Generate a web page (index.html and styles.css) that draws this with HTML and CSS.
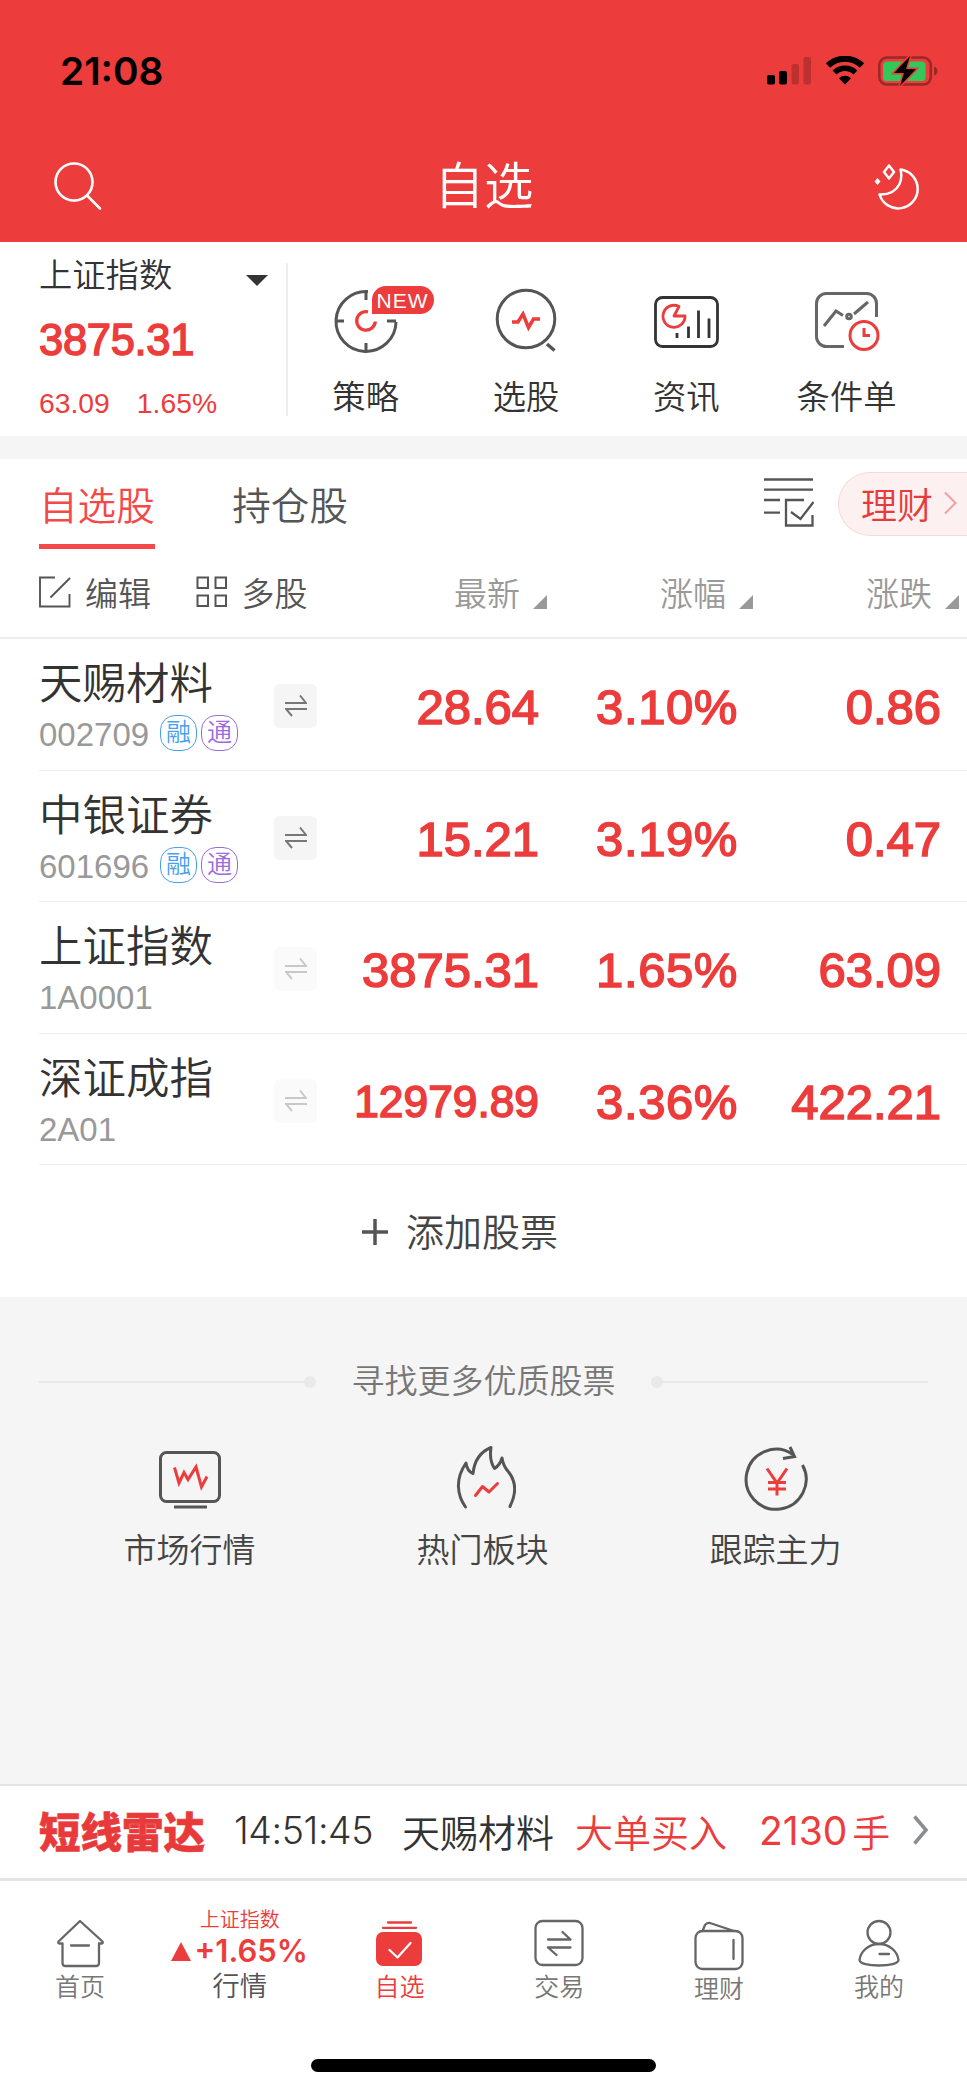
FILE: index.html
```
<!DOCTYPE html>
<html lang="zh-CN">
<head>
  <meta charset="UTF-8">
  <title>自选</title>
  <link rel="stylesheet" href="styles.css">
</head>
<body>
  <header class="header">
    <div class="status-bar">
      <span class="time">21:08</span>
      <div class="status-icons">
        <svg width="44" height="28" viewBox="0 0 44 28">
          <rect x="0" y="18" width="8" height="9.500" rx="2"/>
          <rect x="12" y="14" width="8" height="13.500" rx="2"/>
          <rect x="24.500" y="7" width="7.500" height="20.500" rx="2" opacity=".2"/>
          <rect x="36.500" y="0" width="7.500" height="27.500" rx="2" opacity=".2"/>
        </svg>
        <svg class="wifi" width="40" height="29" viewBox="0 0 40 29">
          <path d="M3 9.500a24.500 24.500 0 0 1 34 0" fill="none" stroke="#000" stroke-width="6"/>
          <path d="M9.500 16.500a15 15 0 0 1 21 0" fill="none" stroke="#000" stroke-width="5.500"/>
          <path d="M20 28.500l-6-6.200a8.500 8.500 0 0 1 12 0z"/>
        </svg>
        <svg width="60" height="30" viewBox="0 0 60 30">
          <rect x="1.300" y="1.600" width="51.500" height="27" rx="7.500" fill="none" stroke="#9b2727" stroke-width="2.500"/>
          <path d="M56 10.500q3.500 1 3.500 4.500t-3.500 4.500z" fill="#9b2727"/>
          <rect x="5" y="5.500" width="42.500" height="19.500" rx="3.500" fill="#34c759"/>
          <path d="M32 0L16 17h10l-4 13 16-17H28z" stroke="#ec3c3c" stroke-width="3"/>
          <path d="M32 0L16 17h10l-4 13 16-17H28z"/>
        </svg>
      </div>
    </div>
    <div class="title-bar">
      <svg width="48" height="50" viewBox="0 0 48 50" fill="none" stroke="#fff" stroke-width="2.600" stroke-linecap="round">
        <circle cx="20" cy="20" r="18.500"/>
        <path d="M33.500 34L46 46.500"/>
      </svg>
      <h1>自选</h1>
      <svg width="46" height="46" viewBox="0 0 46 46" fill="none" stroke="#fff" stroke-width="2.500" stroke-linejoin="round">
        <path d="M26.500 5.500A19.500 19.500 0 1 1 5.500 30.500Q20 31 25.500 20Q28.500 13 26.500 5.500z"/>
        <path d="M15 1.500l5 6.500-5 6.500-5-6.500z"/>
        <path d="M3.500 14l3 3.500-3 3.500-3-3.500z" fill="#fff" stroke="none"/>
      </svg>
    </div>
  </header>

  <section class="overview">
    <div class="index-box">
      <div class="index-name">上证指数 <i class="caret"></i></div>
      <div class="index-value">3875.31</div>
      <div class="index-change"><span>63.09</span><span>1.65%</span></div>
    </div>
    <div class="shortcuts">
      <div class="shortcut">
        <svg width="66" height="66" viewBox="0 0 66 66" fill="none" stroke="#555" stroke-width="3">
          <path d="M35 3.500A30 30 0 1 0 63 34"/>
          <path d="M33 4v8M4 33h7M63 33h-9M33 63v-8"/>
          <path d="M35 23.800A9.300 9.300 0 1 0 42.300 33.500" stroke="#ec3c3c" stroke-width="3.300"/>
        </svg>
        <span>策略</span>
        <b class="badge">NEW</b>
      </div>
      <div class="shortcut">
        <svg width="66" height="66" viewBox="0 0 66 66" fill="none" stroke="#555" stroke-width="3">
          <circle cx="33" cy="31" r="28.800"/>
          <path d="M54 56l7.500 6.500" stroke-width="3.500"/>
          <path d="M19 34h6l5-8 5.500 13.500 5-8.500H47" stroke="#ec3c3c" stroke-width="3.500"/>
        </svg>
        <span>选股</span>
      </div>
      <div class="shortcut">
        <svg width="66" height="66" viewBox="0 0 66 66" fill="none" stroke="#333" stroke-width="2.800">
          <rect x="2.500" y="9.500" width="62" height="49" rx="7"/>
          <path d="M24 45v5M35.500 38.500V50M45.500 22.500V50M56 30.500V50"/>
          <path d="M26 18.500A11 11 0 1 0 32 28H21z" stroke="#ec3c3c" stroke-linejoin="round"/>
        </svg>
        <span>资讯</span>
      </div>
      <div class="shortcut">
        <svg width="66" height="66" viewBox="0 0 66 66" fill="none" stroke="#666" stroke-width="3">
          <path d="M30 58.500H12.500a10 10 0 0 1-10-10V15.500a10 10 0 0 1 10-10h40a10 10 0 0 1 10 10V29"/>
          <path d="M10 38l12-15 7 4.500M40 26L54 14"/>
          <circle cx="35" cy="28.500" r="2.300"/>
          <g stroke="#ec3c3c"><circle cx="50" cy="47.500" r="14"/><path d="M50 40v7.500h6"/></g>
        </svg>
        <span>条件单</span>
      </div>
    </div>
  </section>

  <section class="watchlist">
    <div class="tabs">
      <span class="tab active">自选股</span>
      <span class="tab">持仓股</span>
      <svg class="list-icon" width="50" height="50" viewBox="0 0 50 50" fill="none" stroke="#555" stroke-width="2.300">
        <path d="M0 2.500h49M0 12.700h49M0 23h16M0 35.700h16"/>
        <path d="M40 23H22v25.500h26.500V38"/>
        <path d="M27 35l9.500 7L49.500 25"/>
      </svg>
      <a class="finance">理财
        <svg width="13" height="24" viewBox="0 0 13 24" fill="none" stroke="#f0a0a0" stroke-width="2"><path d="M1 1.500L11.500 12 1 22.500"/></svg>
      </a>
    </div>

    <div class="grid-row toolbar">
      <div class="tools">
        <svg width="32" height="32" viewBox="0 0 32 32" fill="none" stroke="#555" stroke-width="1.900"><path d="M16 1.500H1v29h29.500V18M11.500 21.500L31 2"/></svg>
        <span>编辑</span>
        <svg class="grid-icon" width="32" height="32" viewBox="0 0 32 32" fill="none" stroke="#555" stroke-width="2"><path d="M1.500 1.500h10.500v10.500H1.500zM19.500 1.500H30v10.500H19.500zM1.500 19.500h10.500V30H1.500zM19.500 19.500H30V30H19.500z"/></svg>
        <span>多股</span>
      </div>
      <div class="col">最新<i class="sort"></i></div>
      <div class="col">涨幅<i class="sort"></i></div>
      <div class="col">涨跌<i class="sort"></i></div>
    </div>

    <div class="grid-row stock">
      <div class="stock-name">
        <div class="name">天赐材料</div>
        <div class="code">002709<i class="tag blue">融</i><i class="tag purple">通</i></div>
      </div>
      <div class="swap"><svg width="22" height="22" viewBox="0 0 22 22"><path d="M0 8h21L15 .5M22 14H1l6 7"/></svg></div>
      <div class="num">28.64</div>
      <div class="num pct">3.10%</div>
      <div class="num">0.86</div>
    </div>
    <div class="grid-row stock">
      <div class="stock-name">
        <div class="name">中银证券</div>
        <div class="code">601696<i class="tag blue">融</i><i class="tag purple">通</i></div>
      </div>
      <div class="swap"><svg width="22" height="22" viewBox="0 0 22 22"><path d="M0 8h21L15 .5M22 14H1l6 7"/></svg></div>
      <div class="num">15.21</div>
      <div class="num pct">3.19%</div>
      <div class="num">0.47</div>
    </div>
    <div class="grid-row stock">
      <div class="stock-name">
        <div class="name">上证指数</div>
        <div class="code">1A0001</div>
      </div>
      <div class="swap off"><svg width="22" height="22" viewBox="0 0 22 22"><path d="M0 8h21L15 .5M22 14H1l6 7"/></svg></div>
      <div class="num">3875.31</div>
      <div class="num pct">1.65%</div>
      <div class="num">63.09</div>
    </div>
    <div class="grid-row stock">
      <div class="stock-name">
        <div class="name">深证成指</div>
        <div class="code">2A01</div>
      </div>
      <div class="swap off"><svg width="22" height="22" viewBox="0 0 22 22"><path d="M0 8h21L15 .5M22 14H1l6 7"/></svg></div>
      <div class="num small">12979.89</div>
      <div class="num pct">3.36%</div>
      <div class="num">422.21</div>
    </div>

    <div class="add">
      <svg width="26" height="26" viewBox="0 0 26 26" stroke="#555" stroke-width="3.500"><path d="M13 0v26M0 13h26"/></svg>
      <span>添加股票</span>
    </div>
  </section>

  <section class="discover">
    <div class="discover-title"><i class="line left"></i><span>寻找更多优质股票</span><i class="line right"></i></div>
    <div class="discover-list">
      <div class="discover-item">
        <svg width="66" height="66" viewBox="0 0 66 66" fill="none" stroke="#555" stroke-width="3">
          <rect x="3.500" y="7.500" width="59" height="49" rx="6"/>
          <path d="M17 62h33"/>
          <path d="M17.500 22.500L22 38l5-10.500 4 7L39 22l5.500 20L50 31.500" stroke="#ec3c3c"/>
        </svg>
        <span>市场行情</span>
      </div>
      <div class="discover-item">
        <svg width="66" height="66" viewBox="-3 0 66 66" fill="none" stroke="#555" stroke-width="3" stroke-linejoin="round" stroke-linecap="round">
          <path d="M12.500 62C4 50 2 34 13 18q1 8 7 10.500Q22 9 38 2.500q-2 13 3.500 21Q47 20 49 13q1 8 7 14.500c9 12 6 24 1 34"/>
          <path d="M22.500 50.500l7-9 6.500 5.500 8.500-8.500" stroke="#ec3c3c"/>
        </svg>
        <span>热门板块</span>
      </div>
      <div class="discover-item">
        <svg width="66" height="66" viewBox="0 0 66 66" fill="none" stroke="#555" stroke-width="3">
          <path d="M50 9.500A30 30 0 1 0 59.500 20"/>
          <path d="M47 2l4.500 9.500-11.500 2"/>
          <path d="M24 23.500L34 38l10-14.500M34 38v12.500M25 37.500h18M25 44h18" stroke="#ec3c3c"/>
        </svg>
        <span>跟踪主力</span>
      </div>
    </div>
  </section>

  <section class="radar">
    <strong>短线雷达</strong>
    <span class="radar-time">14:51:45</span>
    <span class="radar-name">天赐材料</span>
    <span class="red">大单买入</span>
    <span class="radar-count red">2130</span><span class="red">手</span>
    <svg width="16" height="30" viewBox="0 0 16 30" fill="none" stroke="#888d92" stroke-width="3.500"><path d="M1.500 1.500L13 15 1.500 28.500"/></svg>
  </section>

  <nav class="nav">
    <div class="nav-item">
      <svg width="50" height="50" viewBox="0 0 50 50"><path d="M25 2L3.500 22.500q-1 2.500 2 2h2V44q0 3 3 3h30.500q3 0 3-3V24.500h2q2.500 0 1.500-2zM16 26.500h18"/></svg>
      <span>首页</span>
    </div>
    <div class="nav-item market">
      <small>上证指数</small>
      <b><i class="up"></i>+1.65%</b>
      <span>行情</span>
    </div>
    <div class="nav-item current">
      <svg width="50" height="50" viewBox="0 0 50 50"><rect x="2" y="13" width="46" height="34" rx="7" fill="#ec3c3c" stroke="none"/><path d="M14 3.500h23M9 8.800h33" stroke="#ec3c3c"/><path d="M15.500 31l8 7.500L36.500 24" stroke="#fff"/></svg>
      <span>自选</span>
    </div>
    <div class="nav-item">
      <svg width="50" height="50" viewBox="0 0 50 50"><rect x="1.500" y="2" width="47" height="44" rx="7"/><path d="M14 20.500h22.500L28.500 13M36.500 28.500H14l8.500 7.500"/></svg>
      <span>交易</span>
    </div>
    <div class="nav-item fund">
      <svg width="50" height="50" viewBox="0 0 50 50"><rect x="1.500" y="10" width="47" height="38" rx="7"/><path d="M8.500 10l2.500-6q1.500-2.500 5-2L40 10M39.500 19v19"/></svg>
      <span>理财</span>
    </div>
    <div class="nav-item">
      <svg width="50" height="50" viewBox="0 0 50 50"><circle cx="25" cy="13.500" r="11.500"/><path d="M25 25c10 0 18.500 7 19.500 16 0 3.500-9 5.500-19.500 5.500S5.500 44.500 5.500 41C6.500 32 15 25 25 25zM25.500 35H35"/></svg>
      <span>我的</span>
    </div>
  </nav>
  <div class="home-indicator"></div>
</body>
</html>
```
FILE: styles.css
```
* {
  box-sizing: border-box;
}

body {
  margin: 0;
  width: 967px;
  height: 2093px;
  overflow: hidden;
  display: flex;
  flex-direction: column;
  font-family: "Liberation Sans", "Noto Sans CJK SC", sans-serif;
  font-weight: 350;
  color: #333;
  background: #fff;
}

body > * {
  flex: none;
}

svg {
  display: block;
  flex: none;
}

i, b, h1 {
  font-style: normal;
  font-weight: inherit;
  margin: 0;
}

.red {
  color: #ec3c3c;
}

/* header */
.header {
  height: 242px;
  background: #ec3c3c;
}

.status-bar {
  height: 141px;
  padding: 0 29px 0 60px;
  display: flex;
  justify-content: space-between;
  align-items: center;
}

.time {
  font: 600 38.800px/40px Inter, sans-serif;
  color: #000;
}

.status-icons {
  display: flex;
  align-items: center;
  gap: 13.500px;
}

.title-bar {
  height: 92px;
  padding: 0 47px 0 54px;
  display: flex;
  justify-content: space-between;
  align-items: center;
  color: #fff;
}

.title-bar h1 {
  margin-right: 8px;
  font-size: 49.500px;
  line-height: 60px;
}

/* index and shortcuts */
.overview {
  height: 194px;
  padding-top: 21px;
  display: flex;
}

.index-box {
  width: 288px;
  height: 153px;
  padding-left: 39px;
  border-right: 2px solid #eee;
}

.index-name {
  display: flex;
  justify-content: space-between;
  align-items: center;
  padding-right: 18px;
  font-size: 33.300px;
  line-height: 26px;
}

.caret {
  border: 11px solid transparent;
  border-top-color: #333;
  border-bottom: 0;
  margin-top: 8px;
}

.index-value {
  margin-top: 26px;
  font-size: 43.500px;
  line-height: 51px;
  letter-spacing: -.3px;
  color: #ec3c3c;
  -webkit-text-stroke: 1.500px #ec3c3c;
}

.index-change {
  margin-top: 21px;
  display: flex;
  gap: 27px;
  font-size: 28.300px;
  line-height: 32px;
  color: #ec3c3c;
}

.shortcuts {
  display: flex;
  margin-left: -2.500px;
}

.shortcut {
  position: relative;
  width: 160.300px;
  padding-top: 25px;
  display: flex;
  flex-direction: column;
  align-items: center;
  font-size: 33.300px;
  line-height: 40px;
}

.shortcut span {
  margin-top: 24px;
}

.badge {
  position: absolute;
  left: 86px;
  top: 23px;
  width: 62px;
  height: 28px;
  border-radius: 14px 14px 14px 0;
  background: #ec3c3c;
  color: #fff;
  font-size: 21px;
  line-height: 29px;
  letter-spacing: 1px;
  text-align: center;
}

/* watchlist */
.watchlist {
  border-top: 23px solid #f5f5f5;
}

.tabs {
  height: 94px;
  padding-left: 39px;
  display: flex;
  font-size: 38.600px;
}

.tab {
  margin-right: 77.500px;
  height: 90px;
  line-height: 95px;
  color: #555;
}

.tab.active {
  border-bottom: 5px solid #f54848;
  color: #f54848;
}

.list-icon {
  margin: 18px 24px 0 auto;
}

.finance {
  width: 129px;
  height: 64px;
  margin-top: 13px;
  padding: 0 0 2px 22px;
  display: flex;
  align-items: center;
  gap: 11px;
  border: 1px solid #f8d8d8;
  border-right: 0;
  border-radius: 32px 0 0 32px;
  background: #fcf0f0;
  color: #e83a3a;
  font-size: 36px;
}

.grid-row {
  display: grid;
  align-items: center;
}

.toolbar {
  height: 86px;
  padding: 0 0 6px 39px;
  grid-template-columns: 302px 206px 206px 206px;
  border-bottom: 2px solid #eee;
  font-size: 33px;
}

.tools {
  display: flex;
  align-items: center;
  color: #555;
}

.tools span {
  margin-left: 14px;
}

.grid-icon {
  margin-left: 44.500px;
}

.col {
  display: flex;
  justify-content: flex-end;
  align-items: flex-end;
  color: #999;
}

.sort {
  margin: 0 0 7px 13px;
  border: 7.500px solid #999;
  border-top-color: transparent;
  border-left-color: transparent;
}

.stock {
  height: 131.500px;
  margin-left: 39px;
  grid-template-columns: 235px 43px 222px 199px 203px;
  border-bottom: 1px solid #eee;
}

.stock-name {
  align-self: start;
  padding-top: 17px;
}

.name {
  font-size: 43.500px;
  line-height: 56px;
}

.code {
  display: flex;
  align-items: center;
  font-size: 33px;
  line-height: 46px;
  color: #999;
}

.tag {
  width: 37px;
  height: 36px;
  margin: -4px 0 0 4px;
  border: 1.500px solid;
  border-radius: 15px;
  font-size: 25px;
  line-height: 33px;
  text-align: center;
}

.tag.blue {
  margin-left: 11px;
  color: #4a9ff0;
}

.tag.purple {
  color: #9a6cdc;
}

.swap {
  width: 43px;
  height: 44px;
  margin-top: 4px;
  border-radius: 6px;
  background: #f5f5f5;
  display: flex;
  align-items: center;
  justify-content: center;
}

.swap svg {
  fill: none;
  stroke: #777;
  stroke-width: 2;
}

.swap.off {
  opacity: .4;
}

.num {
  margin-top: 6px;
  text-align: right;
  font-size: 49px;
  color: #ec3c3c;
  -webkit-text-stroke: 1.600px #ec3c3c;
}

.num.pct {
  letter-spacing: .6px;
}

.num.small {
  font-size: 44.300px;
}

.add {
  height: 132px;
  padding: 3px 0 0 362px;
  display: flex;
  gap: 18px;
  font-size: 38px;
  line-height: 130px;
  color: #444;
}

.add svg {
  margin-top: 51px;
}

/* discover */
.discover {
  height: 489px;
  padding-top: 63px;
  background: #f5f5f5;
  border-bottom: 2px solid #e4e4e4;
}

.discover-title {
  padding: 0 39px;
  display: flex;
  align-items: center;
  justify-content: space-between;
  font-size: 33px;
  line-height: 44px;
  color: #777;
}

.line {
  position: relative;
  width: 271px;
  height: 2px;
  background: #e9e9e9;
}

.line::after {
  content: "";
  position: absolute;
  top: -5px;
  right: -6px;
  width: 12px;
  height: 12px;
  border-radius: 50%;
  background: #e9e9e9;
}

.line.right::after {
  left: -6px;
}

.discover-list {
  padding: 41px 45px 0 43px;
  display: flex;
}

.discover-item {
  flex: 1;
  display: flex;
  flex-direction: column;
  align-items: center;
  font-size: 33px;
  line-height: 44px;
  color: #444;
}

.discover-item span {
  margin-top: 18px;
}

/* radar ticker */
.radar {
  height: 95px;
  padding: 0 38px 4px 39px;
  display: flex;
  align-items: center;
  border-bottom: 3px solid #e4e4e4;
  font-size: 38px;
  white-space: nowrap;
}

.radar strong {
  width: 195px;
  font-size: 41.500px;
  font-weight: 900;
  color: #e83a3a;
  -webkit-text-stroke: .6px #e83a3a;
}

.radar-time {
  width: 168px;
  font: 350 37.500px Inter, sans-serif;
  letter-spacing: -.4px;
}

.radar-name {
  width: 173px;
}

.radar-count {
  margin: 0 5px 0 32px;
  font: 400 39px Inter, sans-serif;
}

.radar svg {
  margin-left: auto;
}

/* bottom nav */
.nav {
  height: 178px;
  padding-top: 38px;
  display: flex;
}

.nav-item {
  width: 159.800px;
  display: flex;
  flex-direction: column;
  align-items: center;
  font-size: 25px;
  line-height: 34px;
  color: #777;
}

.nav-item svg {
  fill: none;
  stroke: #666;
  stroke-width: 2.300;
  stroke-linejoin: round;
  stroke-linecap: round;
}

.nav-item > span {
  margin-top: 1px;
}

.nav-item.fund {
  padding-top: 2px;
}

.nav-item.current {
  color: #ec3c3c;
}

.market {
  margin-top: -14px;
  font-size: 27.500px;
  color: #555;
}

.market small {
  font-size: 20px;
  line-height: 30px;
  color: #ec3c3c;
}

.market b {
  display: flex;
  align-items: center;
  font: 600 31px/32px Inter, sans-serif;
  color: #ec3c3c;
}

.market > span {
  margin-top: 3px;
}

.up {
  margin-right: 3px;
  border: 10px solid transparent;
  border-bottom: 19px solid #ec3c3c;
  border-top: 0;
}

.home-indicator {
  width: 345px;
  height: 13px;
  margin-left: 311px;
  border-radius: 7px;
  background: #000;
}
```
